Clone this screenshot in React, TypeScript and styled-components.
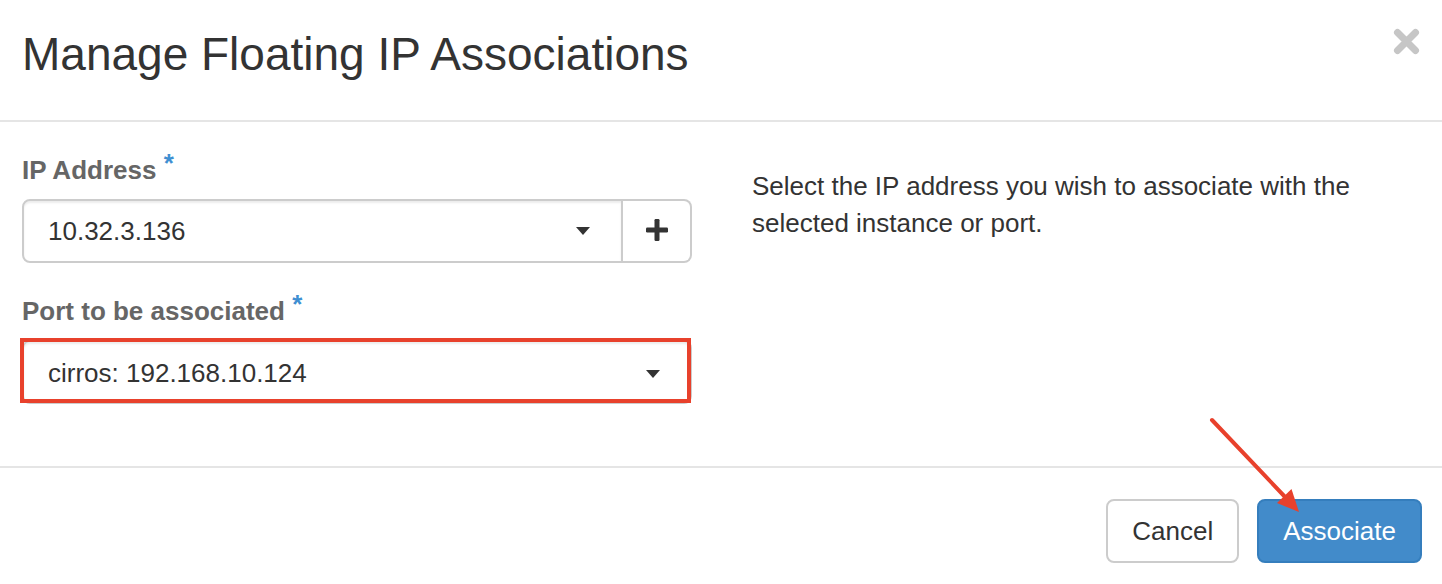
import React from "react";
import styled, { createGlobalStyle, css } from "styled-components";

const GlobalStyle = createGlobalStyle`
  html, body {
    margin: 0;
    padding: 0;
    background: #fff;
  }
  body {
    font-family: "Liberation Sans", Arial, Helvetica, sans-serif;
    color: #333;
  }
  *, *::before, *::after {
    box-sizing: border-box;
  }
`;

const Modal = styled.div`
  position: relative;
  width: 1442px;
  height: 584px;
  background: #fff;
  overflow: hidden;
`;

const Header = styled.header`
  display: flex;
  justify-content: space-between;
  align-items: flex-start;
  height: 122px;
  padding: 29px 22px 0 22px;
  border-bottom: 2px solid #e5e5e5;
`;

const Title = styled.h4`
  margin: 0;
  font-size: 46px;
  line-height: 50px;
  font-weight: 400;
  color: #333;
`;

const CloseButton = styled.button`
  display: flex;
  width: 27px;
  height: 27px;
  margin: -1px 0 0;
  padding: 0;
  border: 0;
  background: none;
  color: #c6c6c6;
  cursor: pointer;
`;

const Body = styled.div`
  display: grid;
  grid-template-columns: 670px 1fr;
  column-gap: 60px;
  padding: 30px 20px 32px 22px;
`;

const FormColumn = styled.div`
  display: flex;
  flex-direction: column;
`;

const FormGroup = styled.div`
  margin-bottom: 30px;
`;

const Label = styled.label`
  display: block;
  height: 37px;
  margin-bottom: 10px;
  font-size: 26px;
  line-height: 37px;
  font-weight: 700;
  color: #666;
`;

/* raised asterisk; shifted without growing the label's line box */
const Required = styled.span`
  position: relative;
  top: -7px;
  color: #3f8fd2;
`;

const InputGroup = styled.div`
  display: flex;
  height: 64px;
`;

const SelectBox = styled.div<{ $grouped?: boolean; $marked?: boolean }>`
  position: relative;
  display: flex;
  align-items: center;
  flex: 1;
  height: 64px;
  padding: ${(p) => (p.$marked ? "3px 30px 0 24px" : "0 31px 0 24px")};
  border: 2px solid #ccc;
  border-radius: ${(p) => (p.$grouped ? "8px 0 0 8px" : "8px")};
  background: #fff;
  box-shadow: inset 0 2px 2px rgba(0, 0, 0, 0.075);
  font-size: 26px;
  color: #333;

  ${(p) =>
    p.$marked &&
    css`
      &::after {
        content: "";
        position: absolute;
        top: -4px;
        left: -4px;
        right: -1px;
        bottom: -1px;
        border: 4px solid #e8412c;
        pointer-events: none;
      }
    `}
`;

const SelectValue = styled.span`
  flex: 1;
`;

const Caret = styled.span`
  width: 0;
  height: 0;
  border-left: 7.5px solid transparent;
  border-right: 7.5px solid transparent;
  border-top: 8px solid #333;
`;

const AddonButton = styled.button`
  display: flex;
  align-items: center;
  justify-content: center;
  width: 69px;
  height: 64px;
  padding: 0 0 2px;
  border: 2px solid #ccc;
  border-left: 0;
  border-radius: 0 8px 8px 0;
  background: #fff;
  color: #333;
  cursor: pointer;
`;

const Help = styled.p`
  margin: 16px 0 0;
  font-size: 26px;
  line-height: 37px;
  color: #333;
`;

const Footer = styled.footer`
  display: flex;
  justify-content: flex-end;
  gap: 18px;
  padding: 31px 20px 0;
  border-top: 2px solid #e5e5e5;
`;

const Button = styled.button<{ $primary?: boolean }>`
  height: 64px;
  padding: 0 24px;
  border-radius: 8px;
  font-family: inherit;
  font-size: 26px;
  cursor: pointer;
  border: 2px solid ${(p) => (p.$primary ? "#357ebd" : "#ccc")};
  background: ${(p) => (p.$primary ? "#428bca" : "#fff")};
  color: ${(p) => (p.$primary ? "#fff" : "#333")};
`;

const Annotation = styled.svg`
  position: absolute;
  inset: 0;
  pointer-events: none;
`;

function CloseIcon() {
  return (
    <svg width="27" height="27" viewBox="0 0 27 27" aria-hidden="true">
      <path
        d="M4.5 4.5 L22.5 22.5 M22.5 4.5 L4.5 22.5"
        stroke="currentColor"
        strokeWidth="7"
        strokeLinecap="round"
      />
    </svg>
  );
}

function PlusIcon() {
  return (
    <svg width="22" height="22" viewBox="0 0 22 22" aria-hidden="true">
      <rect x="8.5" y="0" width="5" height="22" rx="1.2" fill="currentColor" />
      <rect x="0" y="8.5" width="22" height="5" rx="1.2" fill="currentColor" />
    </svg>
  );
}

export default function App() {
  return (
    <>
      <GlobalStyle />
      <Modal>
        <Header>
          <Title>Manage Floating IP Associations</Title>
          <CloseButton aria-label="Close">
            <CloseIcon />
          </CloseButton>
        </Header>

        <Body>
          <FormColumn>
            <FormGroup>
              <Label>
                IP Address <Required>*</Required>
              </Label>
              <InputGroup>
                <SelectBox $grouped>
                  <SelectValue>10.32.3.136</SelectValue>
                  <Caret />
                </SelectBox>
                <AddonButton aria-label="Allocate IP">
                  <PlusIcon />
                </AddonButton>
              </InputGroup>
            </FormGroup>
            <FormGroup>
              <Label>
                Port to be associated <Required>*</Required>
              </Label>
              <SelectBox $marked>
                <SelectValue>cirros: 192.168.10.124</SelectValue>
                <Caret />
              </SelectBox>
            </FormGroup>
          </FormColumn>
          <Help>
            Select the IP address you wish to associate with the selected
            instance or port.
          </Help>
        </Body>

        <Footer>
          <Button>Cancel</Button>
          <Button $primary>Associate</Button>
        </Footer>

        <Annotation width="1442" height="584" viewBox="0 0 1442 584">
          <line
            x1="1212"
            y1="420"
            x2="1287"
            y2="499"
            stroke="#e8412c"
            strokeWidth="4"
            strokeLinecap="round"
          />
          <polygon points="1299,512 1277,503 1291.5,489" fill="#e8412c" />
        </Annotation>
      </Modal>
    </>
  );
}
